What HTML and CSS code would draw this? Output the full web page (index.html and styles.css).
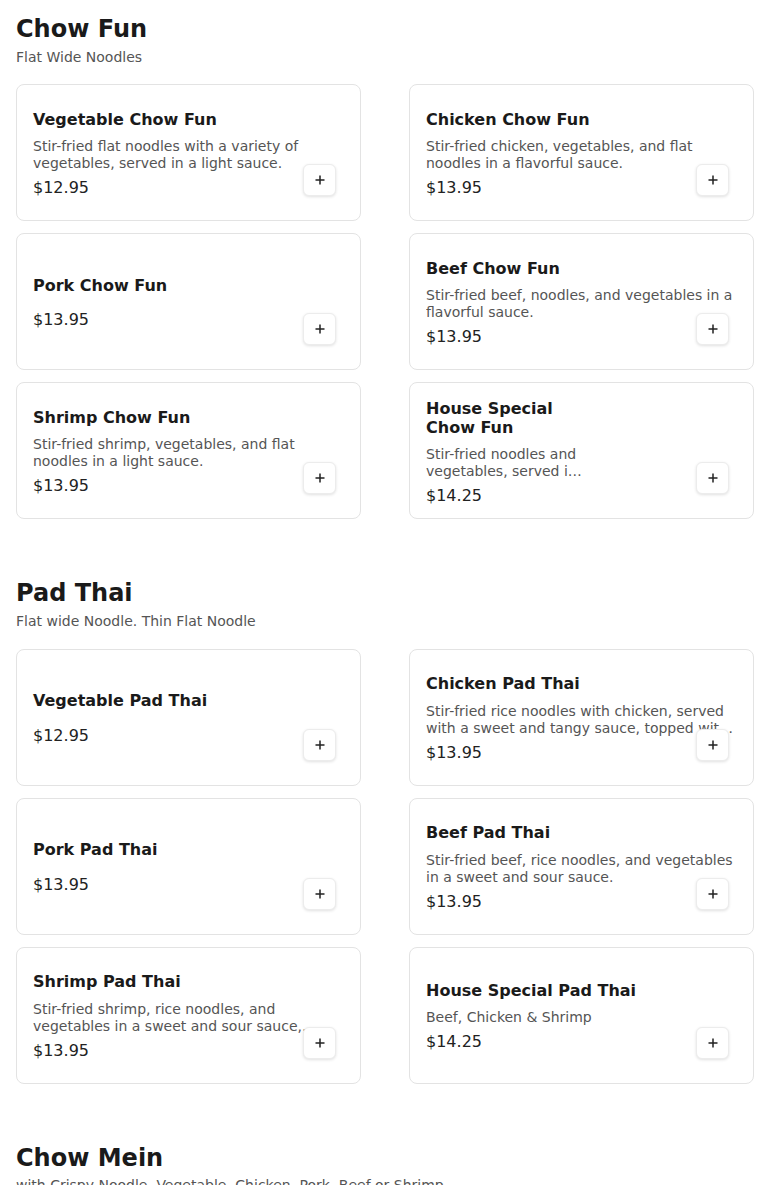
FILE: index.html
```html
<!DOCTYPE html>
<html lang="en">
<head>
    <meta charset="UTF-8">
    <meta name="viewport" content="width=device-width, initial-scale=1.0">
    <title>Menu - Noodles</title>
    <link rel="stylesheet" href="styles.css">
</head>
<body>
    <div class="menu">

        <section class="category">
            <div class="category-header">
                <h2>Chow Fun</h2>
                <p class="category-note">Flat Wide Noodles</p>
            </div>
            <div class="item-grid">
                <div class="item-card">
                    <div class="item-info">
                        <h3 class="item-name">Vegetable Chow Fun</h3>
                        <p class="item-desc">Stir-fried flat noodles with a variety of vegetables, served in a light sauce.</p>
                        <div class="item-price">$12.95</div>
                    </div>
                    <button class="add-btn" aria-label="Add"><svg viewBox="0 0 12 12" width="12" height="12"><path d="M6 1.5v9M1.5 6h9"/></svg></button>
                </div>
                <div class="item-card">
                    <div class="item-info">
                        <h3 class="item-name">Chicken Chow Fun</h3>
                        <p class="item-desc">Stir-fried chicken, vegetables, and flat noodles in a flavorful sauce.</p>
                        <div class="item-price">$13.95</div>
                    </div>
                    <button class="add-btn" aria-label="Add"><svg viewBox="0 0 12 12" width="12" height="12"><path d="M6 1.5v9M1.5 6h9"/></svg></button>
                </div>
                <div class="item-card">
                    <div class="item-info">
                        <h3 class="item-name">Pork Chow Fun</h3>
                        <div class="item-price">$13.95</div>
                    </div>
                    <button class="add-btn" aria-label="Add"><svg viewBox="0 0 12 12" width="12" height="12"><path d="M6 1.5v9M1.5 6h9"/></svg></button>
                </div>
                <div class="item-card">
                    <div class="item-info">
                        <h3 class="item-name">Beef Chow Fun</h3>
                        <p class="item-desc">Stir-fried beef, noodles, and vegetables in a flavorful sauce.</p>
                        <div class="item-price">$13.95</div>
                    </div>
                    <button class="add-btn" aria-label="Add"><svg viewBox="0 0 12 12" width="12" height="12"><path d="M6 1.5v9M1.5 6h9"/></svg></button>
                </div>
                <div class="item-card">
                    <div class="item-info">
                        <h3 class="item-name">Shrimp Chow Fun</h3>
                        <p class="item-desc">Stir-fried shrimp, vegetables, and flat noodles in a light sauce.</p>
                        <div class="item-price">$13.95</div>
                    </div>
                    <button class="add-btn" aria-label="Add"><svg viewBox="0 0 12 12" width="12" height="12"><path d="M6 1.5v9M1.5 6h9"/></svg></button>
                </div>
                <div class="item-card">
                    <div class="item-info item-info-narrow">
                        <h3 class="item-name">House Special Chow Fun</h3>
                        <p class="item-desc">Stir-fried noodles and vegetables, served in a light sauce with beef, chicken and shrimp.</p>
                        <div class="item-price">$14.25</div>
                    </div>
                    <button class="add-btn" aria-label="Add"><svg viewBox="0 0 12 12" width="12" height="12"><path d="M6 1.5v9M1.5 6h9"/></svg></button>
                </div>
            </div>
        </section>

        <section class="category">
            <div class="category-header">
                <h2>Pad Thai</h2>
                <p class="category-note">Flat wide Noodle. Thin Flat Noodle</p>
            </div>
            <div class="item-grid">
                <div class="item-card">
                    <div class="item-info">
                        <h3 class="item-name">Vegetable Pad Thai</h3>
                        <div class="item-price">$12.95</div>
                    </div>
                    <button class="add-btn" aria-label="Add"><svg viewBox="0 0 12 12" width="12" height="12"><path d="M6 1.5v9M1.5 6h9"/></svg></button>
                </div>
                <div class="item-card">
                    <div class="item-info">
                        <h3 class="item-name">Chicken Pad Thai</h3>
                        <p class="item-desc">Stir-fried rice noodles with chicken, served with a sweet and tangy sauce, topped with crushed peanuts.</p>
                        <div class="item-price">$13.95</div>
                    </div>
                    <button class="add-btn" aria-label="Add"><svg viewBox="0 0 12 12" width="12" height="12"><path d="M6 1.5v9M1.5 6h9"/></svg></button>
                </div>
                <div class="item-card">
                    <div class="item-info">
                        <h3 class="item-name">Pork Pad Thai</h3>
                        <div class="item-price">$13.95</div>
                    </div>
                    <button class="add-btn" aria-label="Add"><svg viewBox="0 0 12 12" width="12" height="12"><path d="M6 1.5v9M1.5 6h9"/></svg></button>
                </div>
                <div class="item-card">
                    <div class="item-info">
                        <h3 class="item-name">Beef Pad Thai</h3>
                        <p class="item-desc">Stir-fried beef, rice noodles, and vegetables in a sweet and sour sauce.</p>
                        <div class="item-price">$13.95</div>
                    </div>
                    <button class="add-btn" aria-label="Add"><svg viewBox="0 0 12 12" width="12" height="12"><path d="M6 1.5v9M1.5 6h9"/></svg></button>
                </div>
                <div class="item-card">
                    <div class="item-info">
                        <h3 class="item-name">Shrimp Pad Thai</h3>
                        <p class="item-desc">Stir-fried shrimp, rice noodles, and vegetables in a sweet and sour sauce, topped with peanuts.</p>
                        <div class="item-price">$13.95</div>
                    </div>
                    <button class="add-btn" aria-label="Add"><svg viewBox="0 0 12 12" width="12" height="12"><path d="M6 1.5v9M1.5 6h9"/></svg></button>
                </div>
                <div class="item-card">
                    <div class="item-info">
                        <h3 class="item-name">House Special Pad Thai</h3>
                        <p class="item-desc">Beef, Chicken &amp; Shrimp</p>
                        <div class="item-price">$14.25</div>
                    </div>
                    <button class="add-btn" aria-label="Add"><svg viewBox="0 0 12 12" width="12" height="12"><path d="M6 1.5v9M1.5 6h9"/></svg></button>
                </div>
            </div>
        </section>

        <section class="category">
            <div class="category-header">
                <h2>Chow Mein</h2>
                <p class="category-note">with Crispy Noodle. Vegetable, Chicken, Pork, Beef or Shrimp</p>
            </div>
        </section>

    </div>
</body>
</html>
```

FILE: styles.css
```css
body {
    margin: 0;
    font-family: "DejaVu Sans", Verdana, sans-serif;
    background-color: #ffffff;
    color: #1a1a1a;
}
.menu {
    padding: 15px 16px 40px;
}
.category + .category {
    margin-top: 60px;
}
.category-header {
    margin-bottom: 18px;
}
.category-header h2 {
    margin: 0;
    font-size: 24px;
    line-height: 1.2;
    font-weight: bold;
    color: #1a1a1a;
}
.category-note {
    margin: 5px 0 0;
    font-size: 14px;
    line-height: 17.5px;
    color: #555;
}
.item-grid {
    display: grid;
    grid-template-columns: 1fr 1fr;
    column-gap: 48px;
    row-gap: 12px;
}
.item-card {
    position: relative;
    box-sizing: border-box;
    min-height: 137px;
    display: flex;
    align-items: center;
    padding: 14px 16px 12px;
    border: 1px solid #e3e3e3;
    border-radius: 8px;
    background-color: white;
}
.item-info {
    width: 100%;
}
.item-info-narrow {
    width: 160px;
}
.item-name {
    margin: 0 0 9px;
    font-size: 16px;
    line-height: 1.2;
    font-weight: bold;
    color: #1a1a1a;
}
.item-desc {
    margin: 0;
    font-size: 14px;
    line-height: 17px;
    color: #555;
    display: -webkit-box;
    -webkit-line-clamp: 2;
    -webkit-box-orient: vertical;
    overflow: hidden;
}
.item-price {
    margin-top: 6px;
    font-size: 16px;
    line-height: 1.2;
    color: #222;
}
.item-name + .item-price {
    margin-top: 15px;
}
.add-btn {
    position: absolute;
    right: 24px;
    bottom: 24px;
    width: 33px;
    height: 32px;
    padding: 0;
    display: flex;
    align-items: center;
    justify-content: center;
    background-color: white;
    border: 1px solid #ececec;
    border-radius: 6px;
    box-shadow: 0 1px 3px rgba(0,0,0,0.12);
    cursor: pointer;
}
.add-btn svg {
    stroke: #222;
    stroke-width: 1.5;
    fill: none;
}
```
